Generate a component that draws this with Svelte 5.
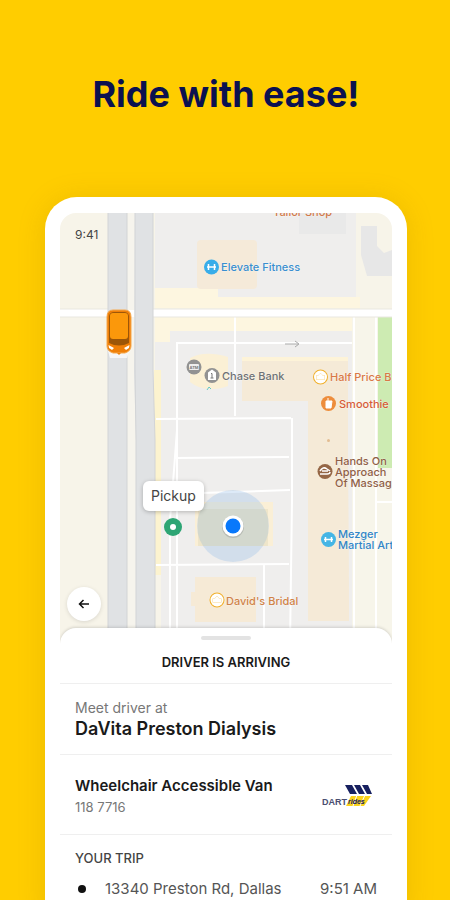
<script>
  const vehicle = { name: 'Wheelchair Accessible Van', number: '118 7716' };
  const stop = { address: '13340 Preston Rd, Dallas', time: '9:51 AM' };
</script>

<main>
  <h1>Ride with ease!</h1>

  <section class="phone" aria-label="Trip tracking">
    <div class="screen">
      <div class="map">
        <svg class="canvas" viewBox="60 213 332 432" role="img" aria-label="Map of the pickup area">
          <rect x="60" y="213" width="332" height="432" fill="#f7f4e9" />

          <!-- city blocks -->
          <path d="M155 213H356V297H218V289H155Z" fill="#efeeed" />
          <path d="M155 308V288H218V297H360V308Z" fill="#fdf6e0" />
          <path d="M299 213H346V234H299Z" fill="#e9e9e9" />
          <path d="M361 226H377V246L384 253L392 250V276H367L361 255Z" fill="#e7e7e7" />
          <path d="M155 317H352V331H170V343H162V400H155Z" fill="#fdf6e0" />
          <path d="M155 342H170V331H352V645H161V400H155Z" fill="#efeeed" />
          <rect x="154" y="370" width="7" height="205" fill="#fcf3cf" />
          <rect x="352" y="317" width="40" height="328" fill="#f7f5ea" />
          <path d="M378 317H392V468H378Z" fill="#cdebb2" />

          <!-- buildings -->
          <rect x="197" y="240" width="60" height="49" rx="4" fill="#f5ead9" />
          <path d="M190 358Q205 350 228 357V386Q205 394 190 382Z" fill="#fbf0d5" />
          <path d="M242 357H348V468Q349 540 349 621H308V401H242Z" fill="#f5ead7" />
          <path d="M242 357H348V361H242Z" fill="#fdf3d8" />
          <rect x="195" y="502" width="78" height="44" fill="#faefd6" />
          <path d="M195 577H256V622H195V606H191V592H195Z" fill="#f6ead6" />

          <!-- lanes and car park aisles -->
          <g fill="none" stroke="#fff" stroke-width="2">
            <path d="M177 645V343H352M235 317V416M156 419L291 418M175 458L289 457M170 494L290 490M292 418V500L290 645M156 565L289 564M170 565V645M177 343V430L174 470L170 520V645M264 565V645" />
            <path d="M354 317V645M376 317V645M376 502H392M128 564H136" />
          </g>
          <path d="M285 344H298M295 341L299 344L295 347" fill="none" stroke="#aaa" />
          <circle cx="328.500" cy="440.500" r="1.500" fill="#e3bd92" />
          <path d="M207 390L209 387L211 389" fill="none" stroke="#66c9c9" />

          <!-- main roads -->
          <path d="M60 313H392" stroke="#e9e7e0" stroke-width="9" />
          <path d="M60 313H392" stroke="#fff" stroke-width="7" />
          <rect x="127" y="213" width="9" height="432" fill="#f6f4ed" />
          <rect x="127" y="310" width="9" height="7" fill="#fff" />
          <path d="M108 213H127V645H108Z" fill="#e0e2e4" />
          <path d="M135 213H153V370L155 440V645H136V440L134 370Z" fill="#e0e2e4" />
          <path d="M108 213V645M127 213V645M135 213V370L136 440V645M153 213V370L155 440V645" fill="none" stroke="#d2d4d6" />

          <!-- places -->
          <g class="place">
            <text x="273" y="216" fill="#d17a4b">Tailor Shop</text>
            <circle cx="211.500" cy="267" r="7.500" fill="#38ade9" />
            <path d="M207 267H216M208.500 264V270M214.500 264V270" stroke="#fff" stroke-width="1.500" />
            <text x="221" y="271" fill="#398fd0">Elevate Fitness</text>

            <circle cx="194" cy="367" r="7.500" fill="#929292" />
            <rect x="189" y="364" width="10" height="6" rx="1" fill="#eee" />
            <text class="tiny" x="189.500" y="369" fill="#777">ATM</text>
            <circle cx="212" cy="375.500" r="7.500" fill="#929292" />
            <path d="M208 372.500L212 369.500L216 372.500V380H208Z" fill="#fff" />
            <path d="M211 373.500H212V378M210.500 378H213.500" fill="none" stroke="#777" />
            <text x="222" y="380" fill="#6e7175">Chase Bank</text>

            <circle cx="320.500" cy="377" r="6.500" fill="#fff" stroke="#f1b02b" stroke-width="2" />
            <path d="M316.500 375.500H324.500V379.500H316.500ZM318.500 375.500Q320.500 372 322.500 375.500" fill="#fff" stroke="#f8d78c" stroke-width="1" />
            <text x="330" y="381" fill="#d97947">Half Price B</text>

            <circle cx="328.500" cy="403.500" r="7.500" fill="#ed8d3c" />
            <path d="M326 401H332L331 408H326ZM328 401V398" fill="#fff" stroke="#fff" />
            <text x="339" y="408" fill="#d65c38">Smoothie</text>

            <circle cx="325" cy="471.500" r="7.500" fill="#956746" />
            <path d="M320 471Q323 466 327 469L330 471M320 474H327Q330 474 330 472M322 471H328" fill="none" stroke="#fff" stroke-width="1.500" />
            <text fill="#906047"><tspan x="335" y="465">Hands On</tspan><tspan x="335" y="476">Approach</tspan><tspan x="335" y="487">Of Massag</tspan></text>

            <circle cx="328.500" cy="539.500" r="7.500" fill="#45b5e5" />
            <path d="M324 539.500H333M325.500 537V542M331.500 537V542" stroke="#fff" stroke-width="1.500" />
            <text fill="#3186c8"><tspan x="338" y="538">Mezger</tspan><tspan x="338" y="549">Martial Art</tspan></text>

            <circle cx="217" cy="600" r="6.500" fill="#fff" stroke="#f1b02b" stroke-width="2" />
            <path d="M213 598.500H221V602.500H213ZM215 598.500Q217 595 219 598.500" fill="#fff" stroke="#f8d78c" stroke-width="1" />
            <text x="226" y="605" fill="#d08348">David's Bridal</text>
          </g>

          <!-- rider location -->
          <circle cx="233" cy="526" r="36" fill="#8fb8e8" fill-opacity=".3" />
          <rect x="198" y="509" width="70" height="37" fill="#bdbd9a" fill-opacity=".2" />
          <circle cx="233" cy="527" r="11" fill="#777" fill-opacity=".3" />
          <circle cx="233" cy="526" r="10.500" fill="#fff" />
          <circle cx="233" cy="526" r="7.500" fill="#0878fb" />

          <!-- pickup pin -->
          <circle cx="173" cy="527" r="9" fill="#2da574" />
          <circle cx="173" cy="527" r="3" fill="#fff" />

          <!-- vehicle -->
          <path d="M108 351H129L127 358H110Z" fill="#fff" fill-opacity=".7" />
          <path d="M107 317Q107 310 113 310H125Q131 310 131 317V346Q131 351 125 353H113Q107 351 107 346Z" fill="#ef7f08" stroke="#f6a94d" />
          <path d="M109 316Q110 312 114 312H124Q128 312 129 316V343Q119 348 109 343Z" fill="#9c5608" />
          <rect x="110" y="313" width="18" height="26" rx="3" fill="#fb980b" />
          <path d="M108.500 345L114 348L112 350L109 348ZM129.500 345L124 348L126 350L129 348Z" fill="#fff" />
          <path d="M117 353L119 355L121 353" fill="#ef7f08" />
        </svg>

        <span class="clock">9:41</span>
        <span class="callout">Pickup</span>
        <button class="back" type="button" aria-label="Back">
          <svg viewBox="0 0 12 12" width="12" height="12"><path d="M11 6H2M5.500 2L1.500 6L5.500 10" fill="none" stroke="#111" stroke-width="1.500" /></svg>
        </button>
      </div>

      <div class="sheet">
        <header>
          <span class="handle"></span>
          <h2>DRIVER IS ARRIVING</h2>
        </header>

        <div class="row meet">
          <p>Meet driver at</p>
          <strong>DaVita Preston Dialysis</strong>
        </div>

        <div class="row vehicle">
          <div>
            <strong>{vehicle.name}</strong>
            <p>{vehicle.number}</p>
          </div>
          <svg class="logo" viewBox="0 0 50 24" width="50" height="24" role="img" aria-label="DART Rides">
            <text x="0" y="21" class="dart">DART</text>
            <path d="M23 1H30L35 10H28ZM32 1H38L43 10H37ZM40 1H46L50 10H45Z" fill="#17205f" />
            <path d="M29 12H49L42 22H24Z" fill="#fbd21b" />
            <path d="M35 11L31 22M43 11L38 22" stroke="#fff" />
            <text x="26" y="20" class="rides">rides</text>
          </svg>
        </div>

        <div class="row trip">
          <h3>YOUR TRIP</h3>
          <div class="stop">
            <span class="dot"></span>
            <span class="address">{stop.address}</span>
            <time>{stop.time}</time>
          </div>
        </div>
      </div>
    </div>
  </section>
</main>

<style>
  :global(body) {
    margin: 0;
  }

  main {
    box-sizing: border-box;
    height: 100vh;
    overflow: hidden;
    padding: 72px 43px 0 45px;
    background: #ffcd00;
    color: #1a1a1a;
    font-family: Inter, 'Liberation Sans', sans-serif;
  }

  h1,
  h2,
  h3,
  p {
    margin: 0;
  }

  h1 {
    margin-bottom: 81px;
    color: #0b1150;
    font-size: 36px;
    font-weight: 700;
    line-height: 44px;
    text-align: center;
    white-space: nowrap;
  }

  .phone {
    padding: 16px 15px;
    border-radius: 32px;
    background: #fff;
    box-shadow: 0 2px 28px rgba(160, 120, 0, 0.2);
  }

  .screen {
    overflow: hidden;
    border-radius: 16px;
  }

  .map {
    position: relative;
  }

  .canvas {
    display: block;
    width: 100%;
  }

  .place {
    font-size: 11px;
    font-weight: 500;
    paint-order: stroke;
    stroke-linejoin: round;
  }

  .place text {
    stroke: rgba(255, 255, 255, 0.4);
    stroke-width: 1px;
  }

  .place .tiny {
    font-size: 4px;
    font-weight: 700;
    stroke: none;
  }

  .clock {
    position: absolute;
    top: 13px;
    left: 15px;
    color: #444;
    font-size: 12px;
    line-height: 18px;
  }

  .callout {
    position: absolute;
    top: 62%;
    left: 25%;
    padding: 6px 8px;
    border-radius: 6px;
    background: #fff;
    box-shadow: 0 1px 4px rgba(0, 0, 0, 0.25);
    color: #444;
    font-size: 14px;
    line-height: 18px;
  }

  .back {
    position: absolute;
    bottom: 24px;
    left: 7px;
    display: flex;
    align-items: center;
    justify-content: center;
    width: 34px;
    height: 34px;
    padding: 0;
    border: 0;
    border-radius: 50%;
    background: #fff;
    box-shadow: 0 1px 4px rgba(0, 0, 0, 0.12);
  }

  .sheet {
    position: relative;
    margin-top: -17px;
    border-radius: 16px 16px 0 0;
    background: #fff;
    box-shadow: 0 -1px 3px rgba(0, 0, 0, 0.14);
  }

  header {
    display: flex;
    flex-direction: column;
    align-items: center;
    gap: 13px;
    padding: 8px 0 12px;
  }

  .handle {
    width: 50px;
    height: 4px;
    border-radius: 2px;
    background: #e3e3e3;
  }

  h2 {
    font-size: 13px;
    font-weight: 600;
    line-height: 18px;
  }

  .row {
    padding: 16px 15px;
    border-top: 1px solid #efefef;
  }

  .meet {
    padding: 14px 15px;
  }

  .meet p {
    color: #777;
    font-size: 14px;
    line-height: 20px;
  }

  .meet strong {
    display: block;
    font-size: 18px;
    font-weight: 600;
    line-height: 22px;
  }

  .vehicle {
    display: flex;
    align-items: center;
    justify-content: space-between;
    padding: 20px 20px 17px 15px;
  }

  .vehicle strong {
    display: block;
    font-size: 15px;
    font-weight: 600;
    line-height: 22px;
  }

  .vehicle p {
    color: #777;
    font-size: 13px;
    line-height: 20px;
  }

  .dart {
    fill: #4a4e70;
    font: 700 9px 'Liberation Sans Narrow', 'Liberation Sans', sans-serif;
  }

  .rides {
    fill: #17205f;
    font: italic 700 7px 'Liberation Sans', sans-serif;
  }

  h3 {
    color: #444;
    font-size: 13px;
    font-weight: 500;
    line-height: 16px;
  }

  .trip {
    padding-top: 15px;
  }

  .stop {
    display: flex;
    align-items: center;
    padding-top: 12px;
    color: #555;
    font-size: 15px;
    line-height: 22px;
  }

  .dot {
    width: 8px;
    height: 8px;
    margin: 0 19px 0 3px;
    border-radius: 50%;
    background: #111;
  }

  .address {
    flex: 1;
  }
</style>
